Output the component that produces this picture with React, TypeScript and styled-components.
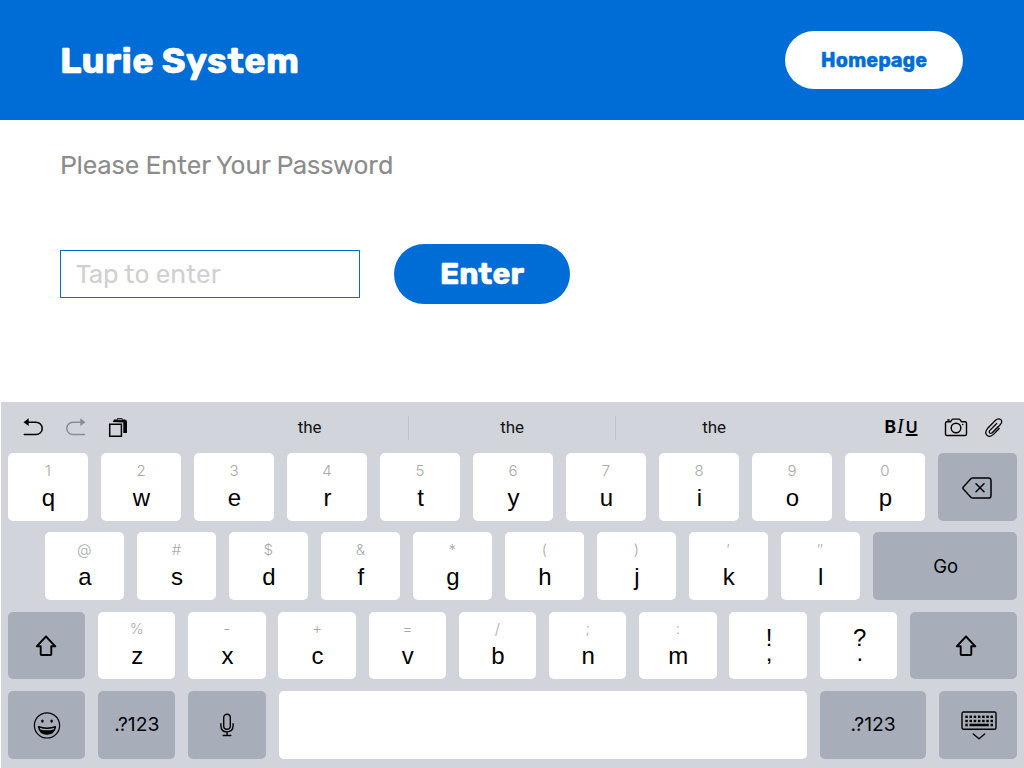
import React from "react";
import styled, { createGlobalStyle } from "styled-components";

const BLUE = "#006dd6";

const GlobalStyle = createGlobalStyle`
  *, *::before, *::after { box-sizing: border-box; }
  body { margin: 0; background: #fff; overflow: hidden; }
  button, input { font: inherit; border: 0; padding: 0; margin: 0; }
`;

const Screen = styled.div`
  width: 1024px;
  height: 768px;
  display: flex;
  flex-direction: column;
  overflow: hidden;
  font-family: Rubik, Inter, sans-serif;
`;

const Header = styled.header`
  height: 120px;
  flex: none;
  padding: 0 61px 0 60px;
  display: flex;
  align-items: center;
  justify-content: space-between;
  background: ${BLUE};
`;

const Title = styled.h1`
  margin: 0;
  padding-top: 1px;
  color: #fff;
  font-size: 36px;
  font-weight: 700;
  line-height: 44px;
  letter-spacing: 0.3px;
  -webkit-text-stroke: 0.6px currentColor;
  white-space: nowrap;
`;

const HomeButton = styled.button`
  width: 178px;
  height: 58px;
  border-radius: 29px;
  background: #fff;
  color: ${BLUE};
  font-size: 20px;
  font-weight: 700;
  -webkit-text-stroke: 0.4px currentColor;
`;

const Main = styled.main`
  height: 282px;
  flex: none;
  padding: 29px 60px 0;
`;

const Prompt = styled.p`
  margin: 0;
  height: 32px;
  line-height: 33px;
  font-size: 26px;
  letter-spacing: -0.08px;
  color: #8c8c8c;
  white-space: nowrap;
`;

const Form = styled.div`
  margin-top: 63px;
  display: flex;
  align-items: center;
  gap: 34px;
`;

const PasswordInput = styled.input`
  width: 300px;
  height: 48px;
  padding: 0 15px;
  border: 1px solid ${BLUE};
  border-radius: 0;
  background: #fff;
  font-size: 26px;
  outline: none;
  &::placeholder { color: #d0d0d0; opacity: 1; }
`;

const EnterButton = styled.button`
  width: 176px;
  height: 60px;
  border-radius: 30px;
  background: ${BLUE};
  color: #fff;
  font-size: 30px;
  font-weight: 700;
  letter-spacing: 0.1px;
  -webkit-text-stroke: 0.6px currentColor;
`;

const Keyboard = styled.section`
  height: 366px;
  flex: none;
  margin-left: 1px;
  padding: 0 7.5px 0 7px;
  background: #d1d4db;
  color: #000;
`;

const Toolbar = styled.div`
  height: 51.3px;
  display: grid;
  grid-template-columns: 203px 197px 208px 196px 1fr;
  align-items: center;
`;

const ToolGroup = styled.div<{ $gap: number; $end?: boolean }>`
  display: flex;
  align-items: center;
  gap: ${(p) => p.$gap}px;
  padding: ${(p) => (p.$end ? "0 14px 0 0" : "0 0 0 15px")};
  justify-content: ${(p) => (p.$end ? "flex-end" : "flex-start")};
`;

const Suggestion = styled.span<{ $divided?: boolean }>`
  height: 24px;
  text-align: center;
  font: 400 17px/23px Roboto, sans-serif;
  letter-spacing: -0.1px;
  color: #151515;
  ${(p) => p.$divided && "border-left: 1px solid #bfc1c6; border-right: 1px solid #bfc1c6;"}
`;

const Format = styled.span`
  display: flex;
  align-items: baseline;
  margin: -2px 9px 0 0;
  font: 700 17.5px/20px Inter, sans-serif;
  i { font: italic 400 20px/20px "Liberation Serif", serif; margin: 0 2px 0 1px; }
  u { font-size: 16px; font-weight: 600; text-decoration-thickness: 2px; text-underline-offset: 0.5px; text-decoration-skip-ink: none; }
`;

const Rows = styled.div`
  display: flex;
  flex-direction: column;
  gap: 11.4px;
`;

const Row = styled.div<{ $indent?: number; $gap: number }>`
  height: 67.8px;
  display: flex;
  gap: ${(p) => p.$gap}px;
  padding-left: ${(p) => p.$indent ?? 0}px;
`;

const Key = styled.button<{ $w?: number; $dark?: boolean; $pad?: string }>`
  height: 67.8px;
  ${(p) => (p.$w ? `width: ${p.$w}px; flex: none;` : "flex: 1;")}
  padding: ${(p) => p.$pad ?? "0"};
  display: flex;
  flex-direction: column;
  align-items: center;
  justify-content: ${(p) => (p.$dark ? "center" : "flex-start")};
  border-radius: 5px;
  background: ${(p) => (p.$dark ? "#a7aeba" : "#fff")};
  color: #000;
  font: 400 18.5px/24px Inter, sans-serif;
  svg { display: block; flex: none; }
`;

const SymbolsKey = styled(Key)`
  font-size: 19.3px;
`;

const Alternate = styled.span<{ $raised?: boolean }>`
  margin-top: ${(p) => (p.$raised ? 7 : 8)}px;
  height: 20px;
  font: 300 15px/20px Inter, sans-serif;
  color: #a9a9a9;
`;

const Letter = styled.span`
  margin-top: 3px;
  height: 28px;
  padding-left: 1px;
  font: 400 24px/28px "Liberation Sans", Arial, sans-serif;
`;

const Marks = styled.span`
  margin-top: 18px;
  padding-left: 2px;
  white-space: pre;
  text-align: center;
  font: 400 24px/15px "Liberation Sans", Arial, sans-serif;
`;

const Icon = ({ w, h, children, sw = 1.5, color = "#000" }: {
  w: number; h: number; children: React.ReactNode; sw?: number; color?: string;
}) => (
  <svg width={w} height={h} viewBox={`0 0 ${w} ${h}`} fill="none" stroke={color}
    strokeWidth={sw} strokeLinecap="round" strokeLinejoin="round">{children}</svg>
);

const Undo = () => (
  <Icon w={20} h={20}>
    <path d="M4 4.2H13A6.2 6.2 0 0 1 13 16.6H1.3" />
    <path d="M.5 4.2 5.7 .3V8Z" fill="#000" stroke="none" />
  </Icon>
);

const Redo = () => (
  <Icon w={20} h={20} color="#8b8d92">
    <path d="M16 4.2H7A6.2 6.2 0 0 0 7 16.6H18.5" />
    <path d="M19.5 4.2 14.3 .3V8Z" fill="#8b8d92" stroke="none" />
  </Icon>
);

const Paste = () => (
  <Icon w={20} h={20}>
    <path d="M4.8 3.9 6 1.6H9V.3H14.5V1.6H16.5Q19 1.6 19 4V15H15.3V4.5Z" fill="#000" stroke="none" />
    <path d="M10 1.7H13.5" stroke="#d1d4db" strokeWidth=".8" />
    <path d="M1.7 6.2H13.4V18.3H1.7Z" strokeLinejoin="miter" />
  </Icon>
);

const Camera = () => (
  <Icon w={24} h={20} sw={1.4}>
    <path d="M3 3.7H6.6L8 1.6Q8.3 1.1 8.9 1.1H15.1Q15.7 1.1 16 1.6L17.4 3.7H21Q22.5 3.7 22.5 5.2V16Q22.5 17.5 21 17.5H3Q1.5 17.5 1.5 16V5.2Q1.5 3.7 3 3.7Z" />
    <circle cx="12" cy="10" r="4.8" />
    <circle cx="18.7" cy="6.5" r=".8" fill="#000" stroke="none" />
    <path d="M3.8 2H5.2" />
  </Icon>
);

const Clip = () => (
  <Icon w={18} h={20} sw={1.25}>
    <path d="M11.7 5.5 4.9 12.4Q3.6 13.9 4.8 15 6 16 7.4 14.6L15.2 6.7Q18 3.5 15.7 1.6 13.3-.2 10.5 2.3L2.7 10.3Q-.9 14.3 2 17.2 4.9 19.8 8.5 16.4L14.2 10.5" />
    <path d="M7.4 14.6 13 8.9" />
  </Icon>
);

const Backspace = () => (
  <Icon w={30} h={22}>
    <path d="M10.4 1H26.4Q29 1 29 3.6V18.4Q29 21 26.4 21H10.4Q9.7 21 9.1 20.4L1.3 12Q.6 11 1.3 10L9.1 1.6Q9.7 1 10.4 1Z" />
    <path d="M14 6.7 22 14.7M22 6.7 14 14.7" />
  </Icon>
);

const Shift = () => (
  <Icon w={22} h={22} sw={1.9}>
    <path d="M11 1.5 20.3 11.3H16.3V19.2Q16.3 20 15.5 20H6.5Q5.7 20 5.7 19.2V11.3H1.7Z" />
  </Icon>
);

const Smile = () => (
  <Icon w={28} h={28} sw={1.2}>
    <circle cx="14" cy="14.4" r="12.6" />
    <ellipse cx="9.4" cy="10.1" rx="1.3" ry="1.6" fill="#000" stroke="none" />
    <ellipse cx="18.6" cy="10.1" rx="1.3" ry="1.6" fill="#000" stroke="none" />
    <path d="M5.4 15.6Q14 18.6 22.6 15.6Q21.3 23.2 14 23.2T5.4 15.6Z" fill="#000" />
    <path d="M6.6 16.8Q14 19.2 21.4 16.8L20.6 18.4Q14 20.2 7.4 18.4Z" fill="#a7aeba" stroke="none" />
  </Icon>
);

const Mic = () => (
  <Icon w={16} h={24} sw={1.4}>
    <rect x="4.7" y="1.2" width="6.6" height="15" rx="3.3" />
    <path d="M1.9 10.8V12.5Q1.9 18.9 8 18.9T14.1 12.5V10.8M8 18.9V22.5M4.2 22.5H11.8" />
  </Icon>
);

const HideKeyboard = () => (
  <Icon w={36} h={29} sw={1.4}>
    <rect x="1" y="1" width="34" height="17.2" rx="1.5" />
    {[4.6, 8.8].map((y) =>
      [4.3, 8.5, 12.7, 16.9, 21.1, 25.3, 29.5].map((x) => (
        <rect key={`${x}-${y}`} x={x} y={y} width="2.5" height="2.4" fill="#000" stroke="none" />
      ))
    )}
    <path d="M4.3 12.8H6.8V15.2H4.3ZM8.5 12.8H27.8V15.2H8.5ZM29.5 12.8H32V15.2H29.5Z" fill="#000" stroke="none" />
    <path d="M12.3 23 18 27.7 23.7 23" />
  </Icon>
);

const LetterKey = ({ pair, width, raised }: { pair: [string, string]; width: number; raised?: boolean }) => (
  <Key $w={width}>
    <Alternate $raised={raised}>{pair[0]}</Alternate>
    <Letter>{pair[1]}</Letter>
  </Key>
);

const top: [string, string][] = [["1", "q"], ["2", "w"], ["3", "e"], ["4", "r"], ["5", "t"], ["6", "y"], ["7", "u"], ["8", "i"], ["9", "o"], ["0", "p"]];
const home: [string, string][] = [["@", "a"], ["#", "s"], ["$", "d"], ["&", "f"], ["*", "g"], ["(", "h"], [")", "j"], ["′", "k"], ["″", "l"]];
const bottom: [string, string][] = [["%", "z"], ["-", "x"], ["+", "c"], ["=", "v"], ["/", "b"], [";", "n"], [":", "m"]];

export default function App() {
  return (
    <Screen>
      <GlobalStyle />
      <Header>
        <Title>Lurie System</Title>
        <HomeButton>Homepage</HomeButton>
      </Header>
      <Main>
        <Prompt>Please Enter Your Password</Prompt>
        <Form>
          <PasswordInput type="password" placeholder="Tap to enter" />
          <EnterButton>Enter</EnterButton>
        </Form>
      </Main>
      <Keyboard>
        <Toolbar>
          <ToolGroup $gap={22.7}><Undo /><Redo /><Paste /></ToolGroup>
          <Suggestion>the</Suggestion>
          <Suggestion $divided>the</Suggestion>
          <Suggestion>the</Suggestion>
          <ToolGroup $gap={17} $end>
            <Format>B<i>I</i><u>U</u></Format>
            <Camera />
            <Clip />
          </ToolGroup>
        </Toolbar>
        <Rows>
          <Row $gap={13}>
            {top.map((p) => <LetterKey key={p[1]} pair={p} width={80} />)}
            <Key $dark $pad="1px 0 0"><Backspace /></Key>
          </Row>
          <Row $gap={12.8} $indent={36.8}>
            {home.map((p) => <LetterKey key={p[1]} pair={p} width={79.2} />)}
            <Key $dark $pad="0 0 0 2px">Go</Key>
          </Row>
          <Row $gap={12.9}>
            <Key $w={77.2} $dark $pad="0 1px 0 0"><Shift /></Key>
            {bottom.map((p) => <LetterKey key={p[1]} pair={p} width={77.3} raised />)}
            <Key $w={77.3}><Marks>{"!\n,"}</Marks></Key>
            <Key $w={77.3} $pad="0 0 0 1px"><Marks>{"?\n."}</Marks></Key>
            <Key $dark $pad="0 0 0 5px"><Shift /></Key>
          </Row>
          <Row $gap={13}>
            <Key $w={77.2} $dark><Smile /></Key>
            <SymbolsKey $w={77.2} $dark $pad="0 0 2px">.?123</SymbolsKey>
            <Key $w={77.2} $dark $pad="0 0 0 1px"><Mic /></Key>
            <Key />
            <SymbolsKey $w={106.4} $dark $pad="0 0 2px">.?123</SymbolsKey>
            <Key $w={77.2} $dark $pad="2px 0 0 2px"><HideKeyboard /></Key>
          </Row>
        </Rows>
      </Keyboard>
    </Screen>
  );
}
